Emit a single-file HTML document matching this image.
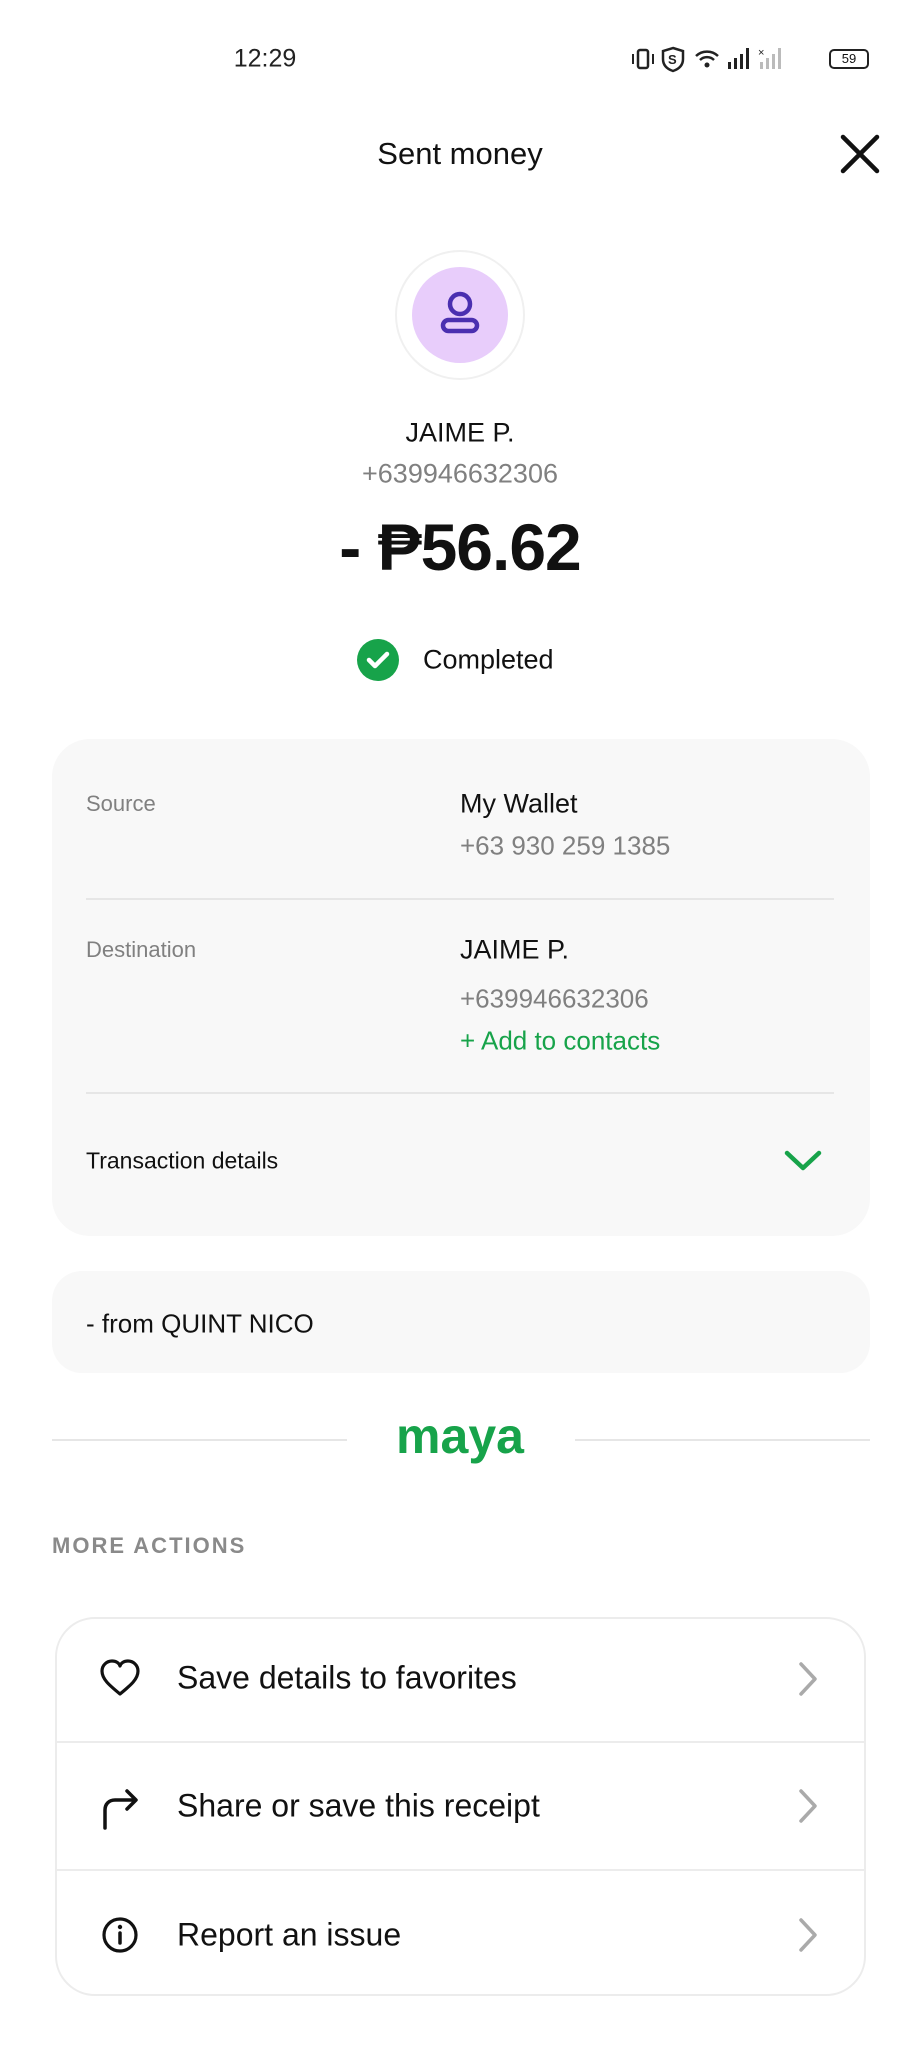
<!DOCTYPE html>
<html><head><meta charset="utf-8"><style>
*{margin:0;padding:0;box-sizing:border-box}
body{width:921px;height:2048px;background:#fff;font-family:"Liberation Sans",sans-serif;color:#111;position:relative;overflow:hidden}
.a{position:absolute;white-space:nowrap}
.c{transform:translate(-50%,-50%)}
.v{transform:translateY(-50%)}
.g{color:#808080}
.card{position:absolute;background:#f8f8f8;border-radius:38px}
.line{position:absolute;height:2px;background:#e6e6e6}
</style></head><body>
<div class="a c" style="left:265px;top:59px;font-size:25px;color:#222">12:29</div>
<svg class="a" style="left:630px;top:44px" width="160" height="30" viewBox="0 0 160 30">
<rect x="8" y="6" width="10" height="18" rx="2" fill="none" stroke="#222" stroke-width="2.5"/><path d="M3 10v10M23 10v10" stroke="#222" stroke-width="2"/>
<path d="M43 4l10 3v8c0 6-4 10-10 12-6-2-10-6-10-12V7z" fill="none" stroke="#222" stroke-width="2.5"/><text x="38" y="20" font-size="13" font-family="Liberation Sans" font-weight="bold" fill="#222">S</text>
<path d="M66 12a16 16 0 0 1 22 0M70 16a10 10 0 0 1 14 0" fill="none" stroke="#222" stroke-width="2.5"/><circle cx="77" cy="21" r="2.5" fill="#222"/>
<rect x="98" y="18" width="3" height="7" fill="#222"/><rect x="104" y="14" width="3" height="11" fill="#222"/><rect x="110" y="10" width="3" height="15" fill="#222"/><rect x="116" y="4" width="3" height="21" fill="#222"/>
<text x="128" y="12" font-size="11" fill="#222" font-family="Liberation Sans">×</text><rect x="130" y="18" width="3" height="7" fill="#bbb"/><rect x="136" y="14" width="3" height="11" fill="#bbb"/><rect x="142" y="10" width="3" height="15" fill="#bbb"/><rect x="148" y="4" width="3" height="21" fill="#bbb"/>
</svg>
<div class="a v" style="left:829px;top:59px;width:40px;height:20px;border:2px solid #222;border-radius:5px;font-size:13px;text-align:center;line-height:16px">59</div>

<div class="a c" style="left:460px;top:154px;font-size:31px">Sent money</div>
<svg class="a" style="left:840px;top:134px" width="40" height="40" viewBox="0 0 40 40"><path d="M3 3L37 37M37 3L3 37" stroke="#111" stroke-width="4.5" stroke-linecap="round"/></svg>

<div class="a" style="left:395px;top:250px;width:130px;height:130px;border-radius:50%;border:2px solid #f0f0f0"></div>
<div class="a" style="left:412px;top:267px;width:96px;height:96px;border-radius:50%;background:#e8cdfb"></div>
<svg class="a" style="left:440px;top:291px" width="40" height="44" viewBox="0 0 40 44"><circle cx="20" cy="13" r="10" fill="none" stroke="#4a2fb0" stroke-width="4.5"/><rect x="3" y="29" width="34" height="11" rx="5.5" fill="none" stroke="#4a2fb0" stroke-width="4.5"/></svg>

<div class="a c" style="left:460px;top:433px;font-size:27px">JAIME P.</div>
<div class="a c g" style="left:460px;top:474px;font-size:27px">+639946632306</div>
<div class="a c" style="left:460px;top:547px;font-size:66px;font-weight:bold;letter-spacing:-1px">- ₱56.62</div>

<svg class="a" style="left:357px;top:639px" width="42" height="42" viewBox="0 0 42 42"><circle cx="21" cy="21" r="21" fill="#17a34a"/><path d="M12 21l6 6 12-12" stroke="#fff" stroke-width="4.5" fill="none" stroke-linecap="round" stroke-linejoin="round"/></svg>
<div class="a v" style="left:423px;top:660px;font-size:27px">Completed</div>

<div class="card" style="left:52px;top:739px;width:818px;height:497px"></div>
<div class="a v g" style="left:86px;top:804px;font-size:22px">Source</div>
<div class="a v" style="left:460px;top:804px;font-size:27px">My Wallet</div>
<div class="a v g" style="left:460px;top:846px;font-size:26px">+63 930 259 1385</div>
<div class="line" style="left:86px;top:898px;width:748px"></div>
<div class="a v g" style="left:86px;top:950px;font-size:22px">Destination</div>
<div class="a v" style="left:460px;top:950px;font-size:27px">JAIME P.</div>
<div class="a v g" style="left:460px;top:999px;font-size:26px">+639946632306</div>
<div class="a v" style="left:460px;top:1041px;font-size:26px;color:#17a34a">+ Add to contacts</div>
<div class="line" style="left:86px;top:1092px;width:748px"></div>
<div class="a v" style="left:86px;top:1161px;font-size:23px">Transaction details</div>
<svg class="a" style="left:783px;top:1149px" width="40" height="24" viewBox="0 0 40 24"><path d="M4 4l16 15 16-15" stroke="#17a34a" stroke-width="4.5" fill="none" stroke-linecap="round" stroke-linejoin="round"/></svg>

<div class="card" style="left:52px;top:1271px;width:818px;height:102px;border-radius:30px"></div>
<div class="a v" style="left:86px;top:1324px;font-size:26px">- from QUINT NICO</div>

<div class="line" style="left:52px;top:1439px;width:295px"></div>
<div class="line" style="left:575px;top:1439px;width:295px"></div>
<div class="a c" style="left:460px;top:1436px;font-size:50px;font-weight:bold;color:#17a34a;letter-spacing:0px">maya</div>

<div class="a v g" style="left:52px;top:1546px;font-size:22px;letter-spacing:2px;font-weight:bold;color:#8a8a8a">MORE ACTIONS</div>

<div class="a" style="left:55px;top:1617px;width:811px;height:379px;border:2px solid #ececec;border-radius:40px"></div>
<div class="line" style="left:56px;top:1741px;width:809px;background:#ececec"></div>
<div class="line" style="left:56px;top:1869px;width:809px;background:#ececec"></div>

<svg class="a" style="left:99px;top:1658px" width="42" height="40" viewBox="0 0 42 40"><path d="M21 36C10 27 3 21 3 13 3 7 8 3 13 3c4 0 7 2 8 5 1-3 4-5 8-5 5 0 10 4 10 10 0 8-7 14-18 23z" fill="none" stroke="#111" stroke-width="3.2" stroke-linejoin="round"/></svg>
<div class="a v" style="left:177px;top:1678px;font-size:32px">Save details to favorites</div>
<svg class="a" style="left:99px;top:1784px" width="42" height="46" viewBox="0 0 42 46"><path d="M6 44V26c0-6 4-10 10-10h20M28 7l9 9-9 9" fill="none" stroke="#111" stroke-width="3.5" stroke-linecap="round" stroke-linejoin="round"/></svg>
<div class="a v" style="left:177px;top:1806px;font-size:32px">Share or save this receipt</div>
<svg class="a" style="left:101px;top:1916px" width="38" height="38" viewBox="0 0 38 38"><circle cx="19" cy="19" r="16" fill="none" stroke="#111" stroke-width="3.2"/><path d="M19 17v10" stroke="#111" stroke-width="3.5" stroke-linecap="round"/><circle cx="19" cy="11" r="2.2" fill="#111"/></svg>
<div class="a v" style="left:177px;top:1935px;font-size:32px">Report an issue</div>

<svg class="a" style="left:796px;top:1660px" width="24" height="38" viewBox="0 0 24 38"><path d="M5 4l14 15L5 34" stroke="#aaa" stroke-width="3.5" fill="none" stroke-linecap="round" stroke-linejoin="round"/></svg>
<svg class="a" style="left:796px;top:1787px" width="24" height="38" viewBox="0 0 24 38"><path d="M5 4l14 15L5 34" stroke="#aaa" stroke-width="3.5" fill="none" stroke-linecap="round" stroke-linejoin="round"/></svg>
<svg class="a" style="left:796px;top:1916px" width="24" height="38" viewBox="0 0 24 38"><path d="M5 4l14 15L5 34" stroke="#aaa" stroke-width="3.5" fill="none" stroke-linecap="round" stroke-linejoin="round"/></svg>
</body></html>
